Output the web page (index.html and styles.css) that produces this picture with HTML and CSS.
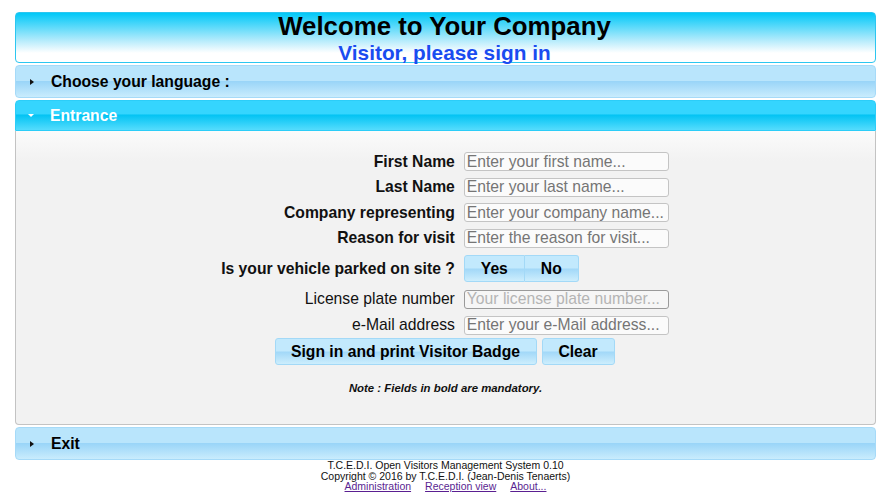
FILE: index.html
```html
<!DOCTYPE html>
<html>
<head>
<meta charset="utf-8">
<title>Visitors</title>
<link rel="stylesheet" href="styles.css">
</head>
<body>
<div class="page">
  <header class="banner">
    <h1 class="title">Welcome to Your Company</h1>
    <h2 class="subtitle">Visitor, please sign in</h2>
  </header>

  <div class="bar bar-closed">
    <span class="tri tri-right"></span>
    <span class="bar-label">Choose your language :</span>
  </div>

  <div class="bar bar-open">
    <span class="tri tri-down"></span>
    <span class="bar-label">Entrance</span>
  </div>
  <section class="panel">
    <form class="form">
      <label class="lbl req">First Name</label>
      <input class="field" type="text" placeholder="Enter your first name...">
      <label class="lbl req">Last Name</label>
      <input class="field" type="text" placeholder="Enter your last name...">
      <label class="lbl req">Company representing</label>
      <input class="field" type="text" placeholder="Enter your company name...">
      <label class="lbl req">Reason for visit</label>
      <input class="field" type="text" placeholder="Enter the reason for visit...">
      <label class="lbl req vehicle">Is your vehicle parked on site ?</label>
      <div class="toggle">
        <button type="button" class="btn tg-yes">Yes</button><button type="button" class="btn tg-no">No</button>
      </div>
      <label class="lbl lic">License plate number</label>
      <input class="field field-disabled lic-in" type="text" placeholder="Your license plate number...">
      <label class="lbl">e-Mail address</label>
      <input class="field" type="text" placeholder="Enter your e-Mail address...">
      <div class="actions">
        <button type="button" class="btn btn-main">Sign in and print Visitor Badge</button>
        <button type="button" class="btn btn-clear">Clear</button>
      </div>
    </form>
    <p class="note">Note : Fields in bold are mandatory.</p>
  </section>

  <div class="bar bar-closed bar-exit">
    <span class="tri tri-right"></span>
    <span class="bar-label">Exit</span>
  </div>

  <footer class="foot">
    <div>T.C.E.D.I. Open Visitors Management System 0.10</div>
    <div>Copyright © 2016 by T.C.E.D.I. (Jean-Denis Tenaerts)</div>
    <div class="links"><a href="#a">Administration</a><a href="#r">Reception view</a><a href="#b">About...</a></div>
  </footer>
</div>
</body>
</html>
```
FILE: styles.css
```css
html, body {
  margin: 0;
  padding: 0;
  background: #ffffff;
}
body {
  font-family: "Liberation Sans", Arial, sans-serif;
  color: #000;
}
.page {
  padding: 12px 14px 0 15px;
}
.banner {
  height: 51px;
  box-sizing: border-box;
  border: 1px solid #2cc6f0;
  border-radius: 4px;
  background: linear-gradient(to bottom, #00c8f8 0px, #5cdafa 14px, #b8ecfc 28px, #ffffff 40px, #ffffff 100%);
  text-align: center;
  display: flex;
  flex-direction: column;
  align-items: center;
}
.title {
  margin: 0;
  font-size: 25.8px;
  font-weight: bold;
  line-height: 26px;
  padding-top: 0;
  margin-right: 2px;
}
.subtitle {
  margin: 0;
  font-size: 20.8px;
  font-weight: bold;
  line-height: 22px;
  color: #1a4cf0;
  padding-top: 3px;
  margin-right: 2px;
}
.bar {
  margin-top: 2px;
  height: 33px;
  box-sizing: border-box;
  border-radius: 4px;
  display: flex;
  align-items: center;
  font-size: 15.7px;
  font-weight: bold;
}
.bar-closed {
  border: 1px solid #a6daf8;
  background: linear-gradient(to bottom, #b9e5fc 0%, #b9e5fc 48%, #9ad5f8 50%, #c9ecfd 100%);
  color: #000;
}
.bar-open {
  height: 31px;
  border: 1px solid #2ccdf8;
  border-radius: 4px 4px 0 0;
  background: linear-gradient(to bottom, #35d5fe 0%, #35d5fe 45%, #02c3f3 48%, #55dcfd 100%);
  color: #fff;
}
.tri {
  width: 0;
  height: 0;
}
.tri-right {
  border-top: 3px solid transparent;
  border-bottom: 3px solid transparent;
  border-left: 4px solid #111;
  margin-left: 14px;
  margin-right: 17px;
}
.tri-down {
  border-left: 3px solid transparent;
  border-right: 3px solid transparent;
  border-top: 3px solid #fff;
  margin-left: 12px;
  margin-right: 16px;
}
.panel {
  height: 294px;
  box-sizing: border-box;
  border: 1px solid #c3c3c3;
  border-top: none;
  border-radius: 0 0 4px 4px;
  background: linear-gradient(to bottom, #fbfbfb 0px, #f2f2f2 30px, #f2f2f2 100%);
  padding-top: 21px;
}
.form {
  display: grid;
  grid-template-columns: auto 205px;
  justify-content: center;
  column-gap: 9px;
  row-gap: 6.6px;
  align-items: center;
  margin-right: 1px;
}
.lbl {
  text-align: right;
  font-size: 15.7px;
  line-height: 18px;
  font-weight: normal;
  color: #111;
}
.lbl.req {
  font-weight: bold;
}
.field {
  box-sizing: border-box;
  width: 205px;
  height: 19px;
  margin: 0;
  padding: 0 2px;
  border: 1px solid #c4c4c4;
  border-radius: 3px;
  background: #fbfbfb;
  font-family: "Liberation Sans", Arial, sans-serif;
  font-size: 15.7px;
  color: #000;
  outline: none;
}
.field::placeholder {
  color: #757575;
}
.field-disabled {
  border-color: #9a9a9a;
  background: #f6f6f6;
}
.field-disabled::placeholder {
  color: #b4b4b4;
}
.lic-in {
  margin-top: 1px;
}
.vehicle, .toggle {
  margin-top: 1px;
}
.toggle {
  display: flex;
  height: 27px;
}
.btn {
  box-sizing: border-box;
  height: 27px;
  margin: 0;
  border: 1px solid #a3d9f7;
  border-radius: 3px;
  background: linear-gradient(to bottom, #c2e9fd 0%, #c2e9fd 48%, #a2d8f8 52%, #cdeefd 100%);
  font-family: "Liberation Sans", Arial, sans-serif;
  font-size: 15.7px;
  font-weight: bold;
  color: #000;
  padding: 0;
  cursor: pointer;
}
.tg-yes {
  width: 61px;
  border-radius: 3px 0 0 3px;
}
.tg-no {
  width: 54px;
  border-left: none;
  border-radius: 0 3px 3px 0;
}
.actions {
  grid-column: 1 / span 2;
  display: flex;
  justify-content: center;
  gap: 5px;
  margin-top: -3px;
  margin-left: -1px;
}
.btn-main {
  width: 262px;
}
.btn-clear {
  width: 73px;
}
.note {
  margin: 17px 0 0 0;
  text-align: center;
  font-size: 11.4px;
  font-weight: bold;
  font-style: italic;
  line-height: 13px;
  color: #111;
}
.bar-exit {
  margin-top: 2px;
}
.foot {
  text-align: center;
  font-size: 10.5px;
  line-height: 10.5px;
  color: #111;
  padding-top: 0;
}
.links a {
  color: #5a1f91;
  text-decoration: underline;
  text-decoration-thickness: 1px;
  text-underline-offset: 1px;
  margin: 0 7px;
}
```
